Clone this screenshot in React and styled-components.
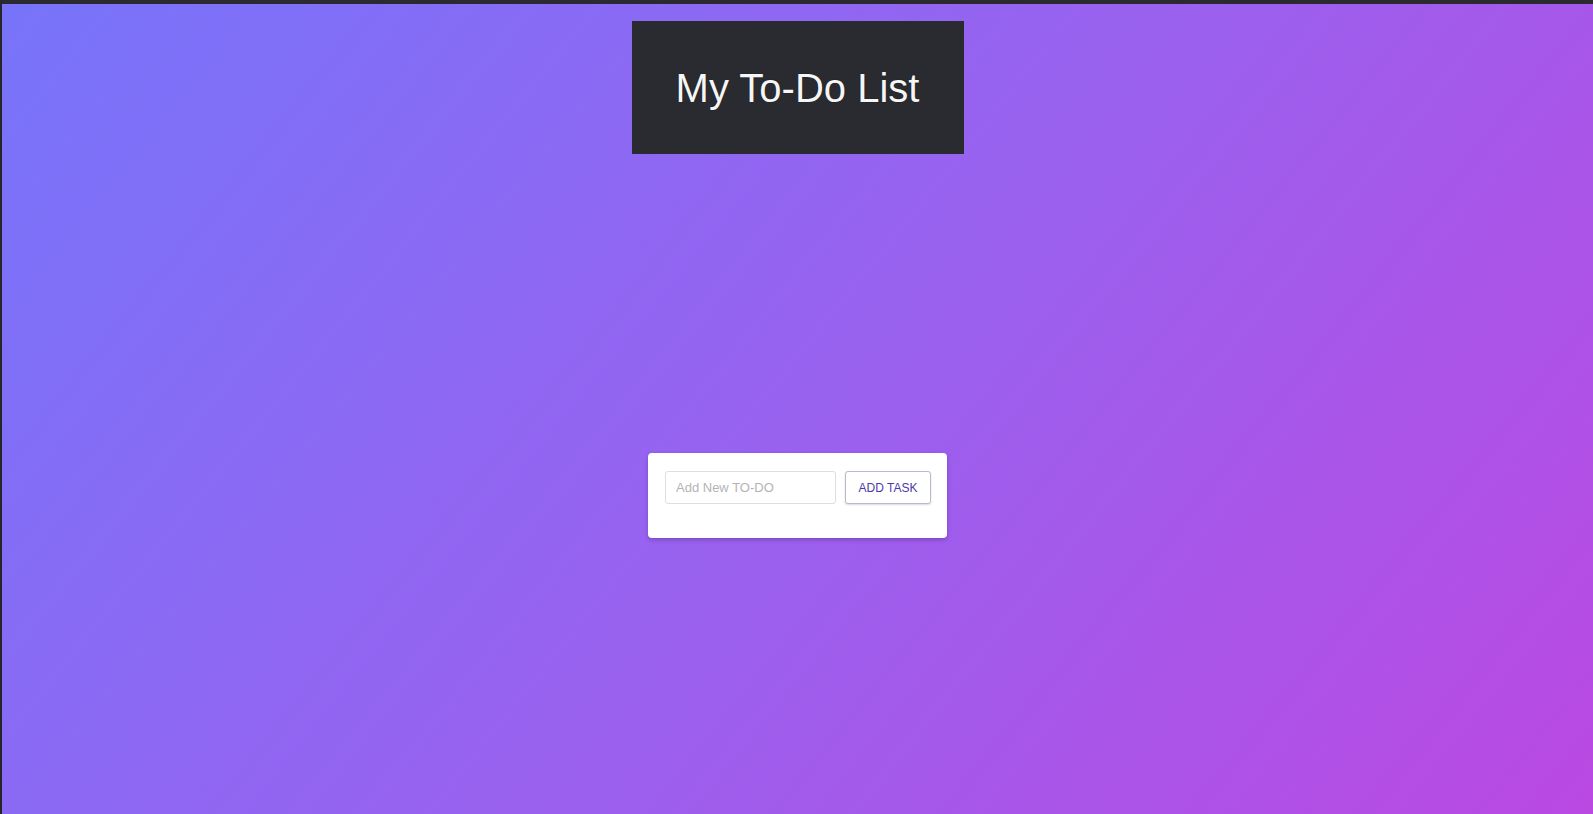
import React from "react";
import styled, { createGlobalStyle } from "styled-components";

const GlobalStyle = createGlobalStyle`
  html, body {
    margin: 0;
    padding: 0;
    height: 100%;
    background: #25252a;
  }
  #root {
    min-height: 100%;
  }
  * {
    box-sizing: border-box;
  }
`;

const Frame = styled.div`
  min-height: 100vh;
  border-top: 4px solid #2b2a30;
  border-left: 2px solid #26262a;
  background: linear-gradient(129deg, #7774fa 0%, #9862ef 50%, #ba49e2 100%);
  display: flex;
  flex-direction: column;
  align-items: center;
`;

const Header = styled.header`
  margin-top: 17px;
  width: 332px;
  height: 133px;
  background: #292b31;
  display: flex;
  align-items: center;
  justify-content: center;
`;

const Title = styled.h1`
  margin: 0;
  padding-top: 2px;
  font-family: "Liberation Sans", Arial, sans-serif;
  font-size: 40px;
  font-weight: 400;
  color: #f6f6f6;
  text-shadow: 0 0 1px rgba(0, 0, 0, 0.7);
`;

const Card = styled.section`
  margin-top: 299px;
  width: 299px;
  padding: 18px 16px 34px 17px;
  background: #ffffff;
  border-radius: 4px;
  box-shadow: 0 2px 4px rgba(40, 0, 80, 0.25);
`;

const Row = styled.form`
  display: flex;
  gap: 9px;
`;

const Input = styled.input`
  width: 171px;
  height: 33px;
  padding: 0 10px;
  border: 1px solid #dedede;
  border-radius: 3px;
  font-family: "Liberation Sans", Arial, sans-serif;
  font-size: 13px;
  color: #333;
  outline: none;
  &::placeholder {
    color: #b4b4b4;
  }
`;

const Button = styled.button`
  width: 86px;
  height: 33px;
  border: 1px solid #bcb9cc;
  border-radius: 3px;
  background: #ffffff;
  color: #4b3ba8;
  font-family: "Liberation Sans", Arial, sans-serif;
  font-size: 12px;
  font-weight: 400;
  box-shadow: 0 1px 2px rgba(0, 0, 0, 0.15);
  cursor: pointer;
  padding: 0;
`;

export default function App() {
  return (
    <>
      <GlobalStyle />
      <Frame>
        <Header>
          <Title>My To-Do List</Title>
        </Header>
        <Card>
          <Row onSubmit={(e) => e.preventDefault()}>
            <Input type="text" placeholder="Add New TO-DO" />
            <Button type="submit">ADD TASK</Button>
          </Row>
        </Card>
      </Frame>
    </>
  );
}
